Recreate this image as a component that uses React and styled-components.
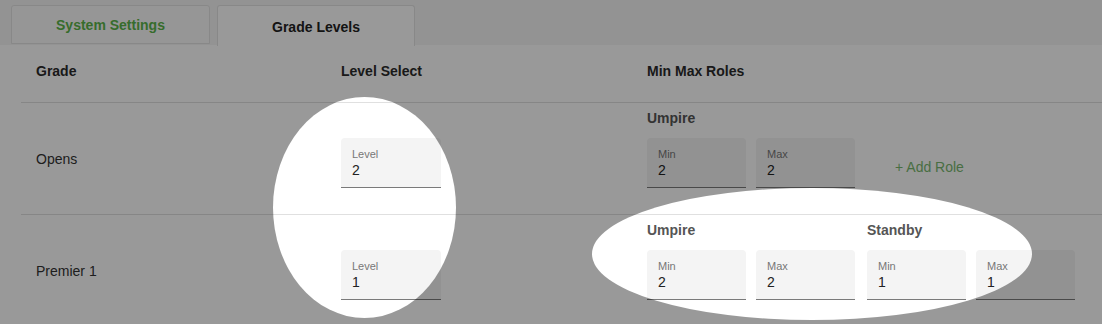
import styled, { createGlobalStyle } from "styled-components";

const GlobalStyle = createGlobalStyle`
  html, body {
    margin: 0;
    padding: 0;
    background: #ffffff;
    font-family: "Liberation Sans", Arial, sans-serif;
  }
`;

const Page = styled.div`
  position: relative;
  width: 1102px;
  height: 324px;
  overflow: hidden;
  background: #ffffff;
  font-family: "Liberation Sans", Arial, sans-serif;
`;

/* tabs ------------------------------------------------------------------ */

const TabBar = styled.div`
  display: flex;
  gap: 7px;
  height: 45px;
  padding: 5px 0 0 11px;
  box-sizing: border-box;
  background: #f5f5f5;
`;

const Tab = styled.div`
  display: flex;
  align-items: center;
  justify-content: center;
  width: ${(p) => p.$width}px;
  height: ${(p) => (p.$active ? 41 : 39)}px;
  box-sizing: border-box;
  padding-top: 1px;
  border: 1px solid #e3e3e3;
  border-bottom: ${(p) => (p.$active ? "none" : "1px solid #e3e3e3")};
  border-radius: 3px 3px 0 0;
  background: ${(p) => (p.$active ? "#ffffff" : "#fbfbfb")};
  color: ${(p) => (p.$active ? "#222222" : "#5cb54a")};
  font-size: 14px;
  font-weight: bold;
`;

/* table ----------------------------------------------------------------- */

const Table = styled.div`
  padding-left: 21px;
`;

const Row = styled.div`
  display: grid;
  grid-template-columns: 305px 306px 1fr;
  border-bottom: 1px solid #e0e0e0;
`;

const HeadCell = styled.div`
  padding: 18px 15px 23px;
  line-height: 16px;
  font-size: 14px;
  font-weight: bold;
  color: #2b2b2b;
`;

const GradeCell = styled.div`
  display: flex;
  align-items: center;
  padding: 0 15px;
  font-size: 14px;
  color: #333333;
`;

const LevelCell = styled.div`
  padding: 35px 15px 26px;
`;

const RolesCell = styled.div`
  display: flex;
  align-items: flex-end;
  padding: 7px 15px 26px;
`;

const RoleGroup = styled.div`
  display: flex;
  flex-direction: column;
  margin-right: 12px;
`;

const RoleName = styled.div`
  height: 16px;
  line-height: 16px;
  margin-bottom: 12px;
  font-size: 14px;
  font-weight: bold;
  color: #555555;
`;

const Fields = styled.div`
  display: flex;
  gap: 10px;
`;

const Field = styled.div`
  width: ${(p) => p.$width || 99}px;
  height: 50px;
  box-sizing: border-box;
  padding: 9px 11px 0;
  background: #f4f4f4;
  border-radius: 4px 4px 0 0;
  border-bottom: 1px solid #7a7a7a;
`;

const FieldLabel = styled.div`
  font-size: 11px;
  line-height: 14px;
  color: #777777;
`;

const FieldValue = styled.div`
  font-size: 14px;
  line-height: 18px;
  color: #222222;
`;

const AddRole = styled.div`
  display: flex;
  align-items: center;
  height: 50px;
  padding-top: 7px;
  box-sizing: border-box;
  margin-left: 28px;
  font-size: 14px;
  color: #79b86f;
`;

/* spotlight overlay ------------------------------------------------------ */

const Shade = styled.svg`
  position: absolute;
  inset: 0;
  pointer-events: none;
`;

const spots = [
  { cx: 364.5, cy: 207.5, rx: 91.5, ry: 110.5 },
  { cx: 812, cy: 254, rx: 220, ry: 66 },
];

function TextField({ label, value, width }) {
  return (
    <Field $width={width}>
      <FieldLabel>{label}</FieldLabel>
      <FieldValue>{value}</FieldValue>
    </Field>
  );
}

function Role({ name, min, max }) {
  return (
    <RoleGroup>
      <RoleName>{name}</RoleName>
      <Fields>
        <TextField label="Min" value={min} />
        <TextField label="Max" value={max} />
      </Fields>
    </RoleGroup>
  );
}

const grades = [
  { name: "Opens", level: 2, roles: [{ name: "Umpire", min: 2, max: 2 }], add: true },
  {
    name: "Premier 1",
    level: 1,
    roles: [
      { name: "Umpire", min: 2, max: 2 },
      { name: "Standby", min: 1, max: 1 },
    ],
  },
];

export default function App() {
  return (
    <Page>
      <GlobalStyle />
      <TabBar>
        <Tab $width={199}>System Settings</Tab>
        <Tab $width={198} $active>
          Grade Levels
        </Tab>
      </TabBar>
      <Table>
        <Row>
          <HeadCell>Grade</HeadCell>
          <HeadCell>Level Select</HeadCell>
          <HeadCell>Min Max Roles</HeadCell>
        </Row>
        {grades.map((g) => (
          <Row key={g.name}>
            <GradeCell>{g.name}</GradeCell>
            <LevelCell>
              <TextField label="Level" value={g.level} width={100} />
            </LevelCell>
            <RolesCell>
              {g.roles.map((r) => (
                <Role key={r.name} {...r} />
              ))}
              {g.add && <AddRole>+ Add Role</AddRole>}
            </RolesCell>
          </Row>
        ))}
      </Table>
      <Shade width="1102" height="324">
        <defs>
          <mask id="spotlight">
            <rect width="1102" height="324" fill="white" />
            {spots.map((s, i) => (
              <ellipse key={i} {...s} fill="black" />
            ))}
          </mask>
        </defs>
        <rect width="1102" height="324" fill="rgba(0,0,0,0.4)" mask="url(#spotlight)" />
      </Shade>
    </Page>
  );
}
